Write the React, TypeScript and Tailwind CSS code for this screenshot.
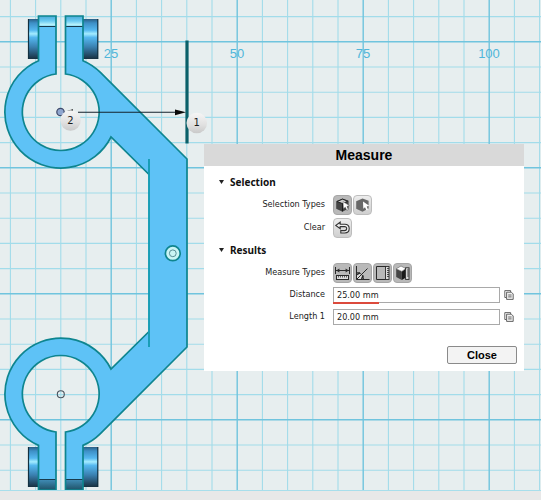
import { useState } from "react";
import type { ReactNode } from "react";

const UI_FONT = "font-['DejaVu_Sans_Condensed','DejaVu_Sans',sans-serif]";

function GridLabels() {
  const labels = [
    { x: 111, value: "25" },
    { x: 237, value: "50" },
    { x: 363, value: "75" },
    { x: 489, value: "100" },
  ];
  return (
    <g className="fill-[#4fb6da] font-['Liberation_Sans',Arial,sans-serif] text-[13px]">
      {labels.map((l) => (
        <text key={l.value} x={l.x} y={58} textAnchor="middle">
          {l.value}
        </text>
      ))}
    </g>
  );
}

/* One clamp screw: a short head left of the tabs and a longer one right of them. */
function Screw({ y }: { y: number }) {
  return (
    <g>
      <rect x="28" y={y} width="11" height="40" fill="url(#steel)" />
      <rect x="83" y={y} width="15" height="40" fill="url(#steel)" />
      <path d={`M28.5 ${y}v40M97.8 ${y}v40`} stroke="#123040" strokeWidth="1.2" />
    </g>
  );
}

function Badge({ x, y, label }: { x: number; y: number; label: string }) {
  return (
    <g>
      <circle cx={x} cy={y} r="10.3" fill="url(#badge)" />
      <text
        x={x}
        y={y + 3}
        textAnchor="middle"
        className="fill-[#1c1c1c] font-['DejaVu_Sans',sans-serif] text-[10px]"
      >
        {label}
      </text>
    </g>
  );
}

function Drawing() {
  return (
    <svg className="absolute inset-0 size-full" role="img" aria-label="Bracket model, top view">
      <defs>
        <pattern id="grid" x="98" y="29" width="126" height="126" patternUnits="userSpaceOnUse">
          <path
            d="M38.4 0V126M63.6 0V126M88.8 0V126M114 0V126M0 38H126M0 63.2H126M0 88.4H126M0 113.6H126"
            stroke="#a2dcea"
            strokeWidth="1.1"
          />
          <path d="M13.2 0V126M0 12.7H126" stroke="#70c4de" strokeWidth="1.4" />
        </pattern>
        <linearGradient id="steel" x1="0" y1="0" x2="0" y2="1">
          <stop offset="0" stopColor="#2a5f85" />
          <stop offset="0.1" stopColor="#3d8fc6" />
          <stop offset="0.28" stopColor="#55b8f0" />
          <stop offset="0.37" stopColor="#a4ecff" />
          <stop offset="0.46" stopColor="#55b8f0" />
          <stop offset="0.7" stopColor="#3a80b0" />
          <stop offset="1" stopColor="#183040" />
        </linearGradient>
        <linearGradient id="tabTop" x1="0" y1="0" x2="0" y2="1">
          <stop offset="0" stopColor="#4aa9d8" />
          <stop offset="0.5" stopColor="#6ccbf2" />
          <stop offset="0.85" stopColor="#b4f0fb" />
          <stop offset="1" stopColor="#8adcf4" />
        </linearGradient>
        <linearGradient id="tabBottom" x1="0" y1="0" x2="0" y2="1">
          <stop offset="0" stopColor="#4290bb" />
          <stop offset="1" stopColor="#1f5267" />
        </linearGradient>
        <linearGradient id="badge" x1="0" y1="0" x2="0" y2="1">
          <stop offset="0" stopColor="#f6f6f6" />
          <stop offset="0.6" stopColor="#e0e0e0" />
          <stop offset="1" stopColor="#c9c9c9" />
        </linearGradient>
      </defs>

      <rect width="100%" height="100%" fill="url(#grid)" />
      <GridLabels />

      <Screw y={19} />
      <Screw y={447} />

      <path
        d="M56 74V16H38.5V60.7A56 56 0 1 0 111 137L149 174.5V331.5L111 369A56 56 0 1 0 38.5 445.4V490H56V432A38.4 38.4 0 1 1 65.5 432V490H83V445.4A56 56 0 0 0 100.4 433.6L187 347V159L100.4 72.4A56 56 0 0 0 83 60.7V16H65.5V74A38.4 38.4 0 1 1 56 74Z"
        fill="#5ec2f6"
      />
      <path d="M39 16H56V26H39zM66 16H83V26H66z" fill="url(#tabTop)" />
      <path d="M39 479H56V490H39zM66 479H83V490H66z" fill="url(#tabBottom)" />
      <path d="M39 26.5H56M66 26.5H83M39 479.5H56M66 479.5H83" stroke="#173a4c" strokeWidth="1" />
      <path
        d="M149 174.5L111 137A56 56 0 1 1 38.5 60.7V16H56V74A38.4 38.4 0 1 0 65.5 74V16H83V60.7A56 56 0 0 1 100.4 72.4L187 159V347L100.4 433.6A56 56 0 0 1 83 445.4V490H65.5V432A38.4 38.4 0 1 0 56 432V490H38.5V445.4A56 56 0 1 1 111 369L149 331.5"
        fill="none"
        stroke="#0e858f"
        strokeWidth="1.7"
      />
      <path d="M149 159V347" stroke="#169cb4" strokeWidth="1.9" />

      <circle cx="172.8" cy="253.3" r="7.4" fill="#c9f5f5" stroke="#0e858f" strokeWidth="1.7" />
      <circle cx="172.8" cy="253.3" r="3.4" fill="none" stroke="#5b8f98" strokeWidth="1" />
      <circle cx="60.8" cy="394.2" r="3.5" fill="none" stroke="#49525c" strokeWidth="1.1" />

      <path d="M187 40.5V143.5" stroke="#0b6069" strokeWidth="3.2" />
      <path d="M78 112.3H176" stroke="#15222c" strokeWidth="1.1" />
      <path d="M186 112.3L175 109.4V115.2z" fill="#0a0a0a" />
      <path d="M67 110.8L73 109.2V110.8z" fill="#0a0a0a" />
      <circle cx="60.5" cy="112" r="3.7" fill="#8fa6cf" stroke="#3f4a6b" strokeWidth="1.2" />
      <Badge x={70.5} y={120.5} label="2" />
      <Badge x={196.8} y={123} label="1" />
    </svg>
  );
}

function EdgeSelectIcon() {
  return (
    <svg viewBox="0 0 17 18" className="size-full" aria-hidden="true">
      <path d="M2.2 5.2L8.5 2.4L14.6 4.8V12.4L8.5 15.8L2.2 12.8z" fill="#444" />
      <path d="M3 5.5L8.5 3.2L13.8 5.2L8.5 7.6z" fill="#cfcfcf" stroke="#222" />
      <path d="M8.5 7.6V15.4" stroke="#1a1a1a" />
      <path d="M9 5.6L15.4 9.6L13 10.4L14.3 13.6L12.7 14.3L11.3 11.2L9.4 12.8z" fill="#fff" stroke="#333" strokeWidth="0.4" />
    </svg>
  );
}

function BodySelectIcon() {
  return (
    <svg viewBox="0 0 17 18" className="size-full" aria-hidden="true">
      <path d="M2.2 5.2L8.5 2.4L14.6 4.8V12.4L8.5 15.8L2.2 12.8z" fill="#686868" />
      <path d="M9 5.4L15.2 9.8L12.7 10.5L14 13.6L12.4 14.3L11 11.2L9.3 12.8z" fill="#fff" />
    </svg>
  );
}

function UndoIcon() {
  return (
    <svg viewBox="0 0 17 18" className="size-full" fill="none" aria-hidden="true">
      <path
        d="M1.8 6.4L6.2 3.2V5.2H10.8C13.6 5.2 15.2 7.2 15.2 9.6C15.2 12.2 13.4 14 10.8 14H6.8V11.6H10.6C12 11.6 12.7 10.7 12.7 9.6C12.7 8.4 11.9 7.6 10.6 7.6H6.2V9.6z"
        fill="#f0f0f0"
        stroke="#333"
        strokeWidth="1.1"
      />
    </svg>
  );
}

function DistanceIcon() {
  return (
    <svg viewBox="0 0 17 18" className="size-full" fill="none" stroke="#2a2a2a" aria-hidden="true">
      <path d="M1.5 3V10M15.5 3V10M2 6.5H15" />
      <path d="M5.4 4.4L2.2 6.5L5.4 8.6zM11.6 4.4L14.8 6.5L11.6 8.6z" fill="#2a2a2a" stroke="none" />
      <rect x="2.5" y="11.5" width="12" height="4" fill="#ddd" />
      <path d="M4.5 11.5v2M6.5 11.5v2M8.5 11.5v2M10.5 11.5v2M12.5 11.5v2" strokeWidth="0.7" />
    </svg>
  );
}

function AngleIcon() {
  return (
    <svg viewBox="0 0 17 18" className="size-full" fill="none" stroke="#2a2a2a" aria-hidden="true">
      <path d="M2.5 8.6A6.8 6.8 0 0 1 9.4 15H2.5z" fill="#ddd" stroke="none" />
      <path d="M2.5 2V15.5H15.5" />
      <path d="M2.5 15.5L13.5 4.5" />
      <path d="M2.5 8.6C6.4 8.6 9.3 11.2 9.5 15.2" />
      <path d="M2.8 10.6L6 8.8M7.6 15L9.2 11.4" strokeWidth="1.6" />
    </svg>
  );
}

function LengthIcon() {
  return (
    <svg viewBox="0 0 17 18" className="size-full" fill="none" stroke="#2a2a2a" aria-hidden="true">
      <path d="M11.5 2.5H2.5V15.5H11.5" />
      <rect x="11.5" y="2.5" width="3.5" height="13" fill="#ddd" strokeWidth="0.9" />
      <path d="M13 4.5h2M13 6.5h2M13 8.5h2M13 10.5h2M13 12.5h2" strokeWidth="0.8" />
    </svg>
  );
}

function VolumeIcon() {
  return (
    <svg viewBox="0 0 17 18" className="size-full" aria-hidden="true">
      <path d="M2.2 5V13L7.8 16V7.4z" fill="#444" />
      <path d="M7.8 7.4V16L11.6 13.8V5z" fill="#1a1a1a" />
      <path d="M2.2 4.8L7 2L11.8 4.6L7.8 7.4z" fill="#fff" stroke="#444" strokeWidth="0.5" />
      <rect x="11.6" y="3.8" width="3.4" height="11.6" fill="#ddd" stroke="#2a2a2a" strokeWidth="0.9" />
      <path d="M13 6h1.8M13 8h1.8M13 10h1.8M13 12h1.8" stroke="#2a2a2a" strokeWidth="0.8" />
    </svg>
  );
}

function CopyIcon() {
  return (
    <svg viewBox="0 0 10 10" className="size-[10px]" fill="none" stroke="#555" strokeWidth="0.9" aria-hidden="true">
      <path d="M2.5 7.5H0.8V0.6H6.6V2" />
      <path d="M2.6 2.2H7.4L9.2 4V9.4H2.6z" fill="#f2f2f2" />
      <path d="M4.2 5H7.6M4.2 6.9H7.6" />
    </svg>
  );
}

function IconButton({
  label,
  pressed,
  onClick,
  children,
}: {
  label: string;
  pressed?: boolean;
  onClick?: () => void;
  children: ReactNode;
}) {
  const tone = pressed
    ? "border-[#a6a6a6] bg-[#b9b9b9]"
    : "border-[#bdbdbd] bg-linear-to-b from-[#ededed] to-[#cfcfcf]";
  return (
    <button
      type="button"
      aria-label={label}
      aria-pressed={pressed}
      onClick={onClick}
      className={`h-5 w-[19px] rounded-[4px] border ${tone}`}
    >
      {children}
    </button>
  );
}

function Section({ title, children }: { title: string; children: ReactNode }) {
  const [open, setOpen] = useState(true);
  return (
    <section>
      <h3>
        <button
          type="button"
          aria-expanded={open}
          onClick={() => setOpen(!open)}
          className="flex h-[22px] items-center gap-[6px] pl-[15px] font-['Noto_Sans',sans-serif] text-[10px] font-bold text-[#111]"
        >
          <svg viewBox="0 0 5 4" className="h-1 w-[5px]" aria-hidden="true">
            <path d="M0 0H5L2.5 4z" fill="#222" />
          </svg>
          {title}
        </button>
      </h3>
      {open && children}
    </section>
  );
}

function IconRow({ label, children }: { label: string; children: ReactNode }) {
  return (
    <div role="group" aria-label={label} className="flex h-[23px] items-center gap-2">
      <span className="w-[121px] text-right">{label}</span>
      <div className="flex gap-px">{children}</div>
    </div>
  );
}

function ValueRow({ id, label, value, marked }: { id: string; label: string; value: string; marked?: boolean }) {
  return (
    <div className="flex h-[22px] items-center gap-2 pr-[10px]">
      <label htmlFor={id} className="w-[121px] text-right">
        {label}
      </label>
      <div className="relative flex min-w-0 flex-1">
        <input
          id={id}
          readOnly
          defaultValue={value}
          className="h-4 w-full min-w-0 border border-[#a9a9a9] bg-white px-[3px] text-[9px] text-[#222] outline-none"
        />
        {marked && <span className="absolute top-[15px] left-0 h-[2px] w-[46px] bg-[#dc4a3c]" />}
      </div>
      <button type="button" aria-label={`Copy ${label}`} className="-ml-1">
        <CopyIcon />
      </button>
    </div>
  );
}

function MeasureDialog() {
  const [mode, setMode] = useState("edge");
  return (
    <div
      role="dialog"
      aria-labelledby="measure-title"
      className={`relative w-full bg-white text-[9px] text-[#222] ${UI_FONT}`}
    >
      <h2
        id="measure-title"
        className="h-[22px] bg-[#d9d9d9] text-center font-['Liberation_Sans',Arial,sans-serif] text-[14px] leading-[22px] font-bold text-black"
      >
        Measure
      </h2>
      <div className="pt-[5px]">
        <Section title="Selection">
          <IconRow label="Selection Types">
            <IconButton label="Edges and faces" pressed={mode === "edge"} onClick={() => setMode("edge")}>
              <EdgeSelectIcon />
            </IconButton>
            <IconButton label="Bodies" pressed={mode === "body"} onClick={() => setMode("body")}>
              <BodySelectIcon />
            </IconButton>
          </IconRow>
          <IconRow label="Clear">
            <IconButton label="Clear selection">
              <UndoIcon />
            </IconButton>
          </IconRow>
        </Section>
        <Section title="Results">
          <IconRow label="Measure Types">
            <IconButton label="Distance" pressed>
              <DistanceIcon />
            </IconButton>
            <IconButton label="Angle" pressed>
              <AngleIcon />
            </IconButton>
            <IconButton label="Length" pressed>
              <LengthIcon />
            </IconButton>
            <IconButton label="Volume" pressed>
              <VolumeIcon />
            </IconButton>
          </IconRow>
          <ValueRow id="distance" label="Distance" value="25.00 mm" marked />
          <ValueRow id="length-1" label="Length 1" value="20.00 mm" />
        </Section>
      </div>
      <div className="flex justify-end px-[7px] pt-[18px] pb-[7px]">
        <button
          type="button"
          className="h-[18px] w-[70px] rounded-[2px] border border-[#8a8a8a] bg-[#f3f3f3] font-['Liberation_Sans',Arial,sans-serif] text-[11px] leading-4 font-bold text-black"
        >
          Close
        </button>
      </div>
    </div>
  );
}

export default function App() {
  return (
    <div className="flex min-h-screen flex-col bg-[#e8e8e8]">
      <main className="relative flex-1 overflow-hidden border-b border-[#a8deeb] bg-[#e7eeef] pt-[144px] pr-[17px] pb-6 pl-[204px]">
        <Drawing />
        <MeasureDialog />
      </main>
      <footer className="h-[9px]" />
    </div>
  );
}
